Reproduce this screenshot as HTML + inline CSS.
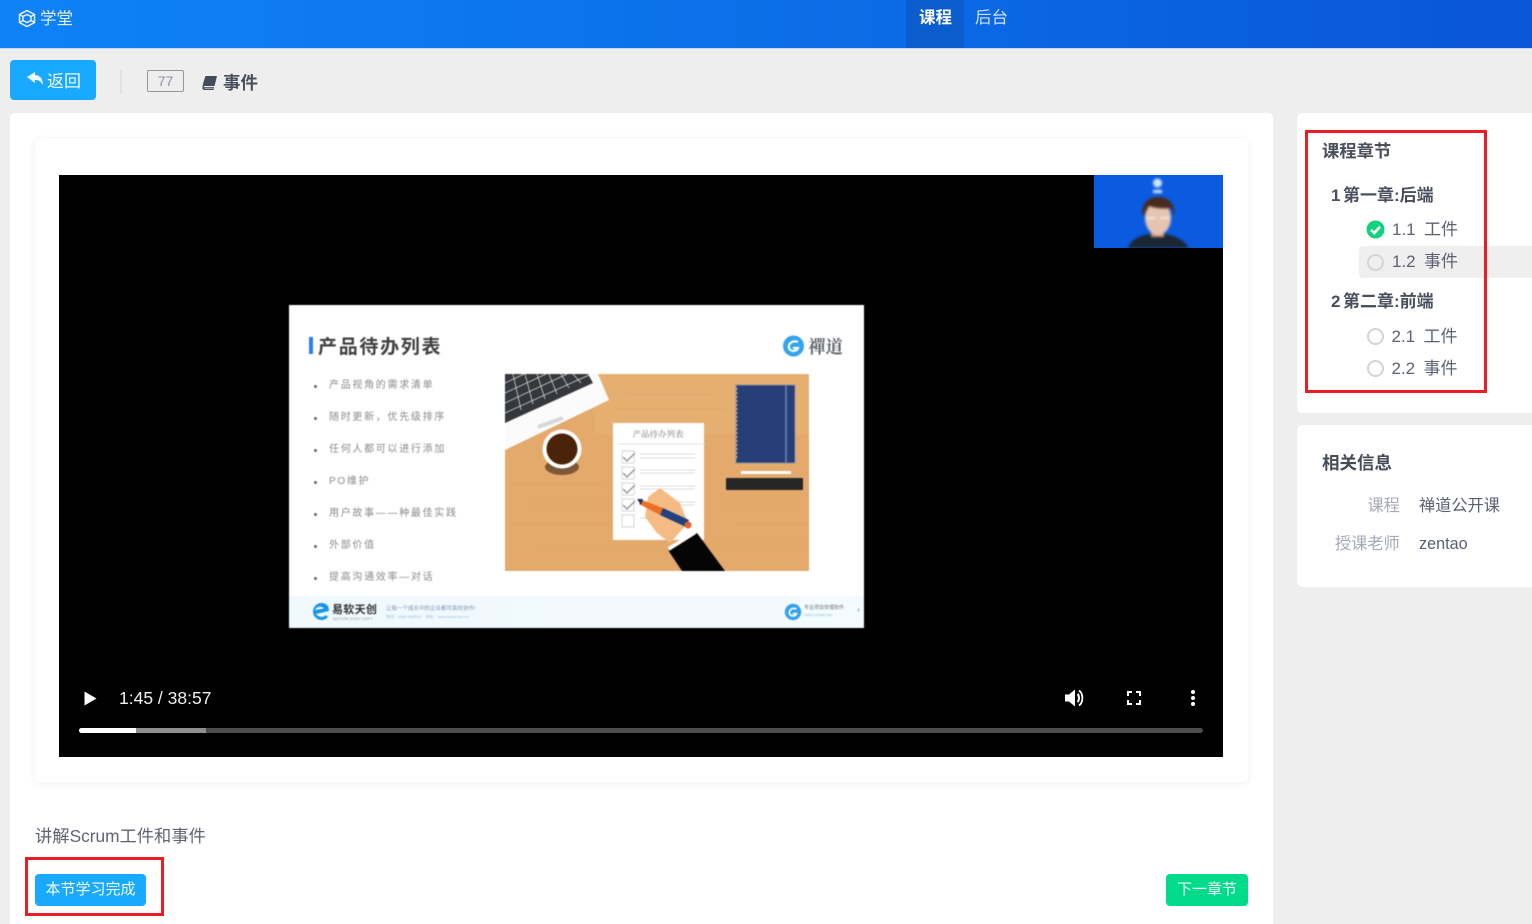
<!DOCTYPE html>
<html lang="zh"><head><meta charset="utf-8"><title>学堂</title>
<style>
*{box-sizing:border-box}
html,body{margin:0;padding:0;width:1532px;height:924px;overflow:hidden}
body{background:#eeeeee;position:relative;font-family:"Liberation Sans","Noto Sans CJK SC",sans-serif;color:#4a5060}
.wrap{position:absolute;left:0;top:0;width:1532px;height:924px;overflow:hidden;filter:blur(.3px)}
.slide{position:absolute;left:0;top:0;width:1532px;height:924px;filter:blur(.4px)}
.a{position:absolute;white-space:nowrap}
.card{position:absolute;background:#fff;border-radius:5px}
.b{font-weight:700}
.sl{position:absolute;left:329px;font-size:10px;letter-spacing:1.7px;color:#8a8a8a;white-space:nowrap;line-height:14px}
.dot{position:absolute;left:314px;width:3px;height:3px;border-radius:50%;background:#666}
.ring{position:absolute;width:17px;height:17px;border-radius:50%;border:2px solid #d4d4d4}
.n{position:absolute;font-size:17px;line-height:24px;color:#5d6373;white-space:nowrap}
.n span{margin-left:8.4px}
.ch{font-size:17px;line-height:23px;color:#4a4f5d;font-weight:700}
.ch span{margin-left:2.5px}
</style></head><body>
<div class="wrap">

<div class="a" style="left:0;top:0;width:1532px;height:49px;background:linear-gradient(90deg,#0f82f8 0%,#0b6fe8 50%,#0a55d8 100%);border-bottom:1px solid #c6d8f4"></div>
<svg class="a" style="left:18px;top:9px" width="18" height="19" viewBox="0 0 18 19" fill="none" stroke="#e6f0ff" stroke-width="1.500"><path d="M9 1.500 16.500 5.500v8L9 17.500 1.500 13.500v-8z"/><path d="M5 7.500 9 5.500l4 2v4l-4 2-4-2z"/><path d="M1.500 5.500 5 7.500M16.500 5.500 13 7.500M1.500 13.500 5 11.500M16.500 13.500 13 11.500"/></svg>
<div class="a" style="left:40px;top:8px;font-size:16.500px;line-height:22px;color:#e3eeff">学堂</div>
<div class="a" style="left:906px;top:0;width:58px;height:48px;background:#0b5ccd"></div>
<div class="a b" style="left:919px;top:7px;font-size:16.500px;line-height:22px;color:#fff">课程</div>
<div class="a" style="left:975px;top:7px;font-size:16.500px;line-height:22px;color:#cfe1fb">后台</div>

<div class="a" style="left:10px;top:60px;width:86px;height:40px;background:#19aaff;border-radius:4px"></div>
<svg class="a" style="left:26px;top:71px" width="18" height="16" viewBox="0 0 18 16"><path d="M1 6 9 1V4C14 4 17 8 17 14 15 10.500 13 9 9 9V12z" fill="#eef8ff"/></svg>
<div class="a" style="left:47px;top:70px;font-size:17px;line-height:23px;color:#f2faff">返回</div>
<div class="a" style="left:120px;top:70px;width:2px;height:24px;background:#e2e2e2"></div>
<div class="a" style="left:147px;top:70px;width:37px;height:22px;border:1px solid #9398a3;border-radius:2px;font-size:14px;line-height:20px;text-align:center;color:#8e93a0">77</div>
<svg class="a" style="left:201px;top:75px" width="17" height="16" viewBox="0 0 17 16"><path d="M4.500 1H16L13.500 11H3L1.500 14.500C1 12 2 8 4.500 1z" fill="#454b59"/><path d="M3 12H13L12.500 15H3C1.500 15 1.500 12.500 3 12z" fill="#454b59"/><path d="M3.500 13.200H12.300" stroke="#ddd" stroke-width=".8"/></svg>
<div class="a b" style="left:223px;top:71px;font-size:17.500px;line-height:24px;color:#4a4f5c">事件</div>

<div class="card" style="left:10px;top:113px;width:1263px;height:811px;border-radius:5px 5px 0 0"></div>
<div class="card" style="left:35px;top:139px;width:1213px;height:643px;box-shadow:0 1px 8px rgba(0,0,0,.07)"></div>

<div class="a" style="left:59px;top:175px;width:1164px;height:582px;background:#000"></div>
<div class="a" style="left:1094px;top:175px;width:129px;height:73px;background:#0a5be0;overflow:hidden">
 <svg width="129" height="73" viewBox="0 0 129 73" style="filter:blur(1.200px)">
  <circle cx="63.500" cy="8" r="4.500" fill="#cfe6fa"/><rect x="59" y="15" width="9" height="3" fill="#dfeafa"/>
  <path d="M34 73c3-9 12-12 20-14h18c9 2 17 5 23 14z" fill="#1c2735"/>
  <rect x="57" y="50" width="13" height="12" fill="#c99a80"/>
  <ellipse cx="64" cy="43" rx="13" ry="17" fill="#e5c4b0"/>
  <path d="M49 42c-3-14 6-20 15-20s18 5 16 19l-3-8c-7 1-17 0-22-2z" fill="#4a2a1e"/>
  <path d="M52 43h10M66 43h10" stroke="#f1e8e0" stroke-width="2"/>
 </svg>
</div>

<div class="slide">
<div class="a" style="left:289px;top:305px;width:575px;height:323px;background:#fff"></div>
<div class="a" style="left:309px;top:337px;width:4px;height:17px;background:#2b7fee"></div>
<div class="a b" style="left:318px;top:335px;font-size:19px;letter-spacing:1.700px;line-height:26px;color:#3f3f3f">产品待办列表</div>
<svg class="a" style="left:782px;top:335px" width="23" height="22" viewBox="0 0 23 22"><circle cx="11.500" cy="11" r="10.500" fill="#33a3ec"/><path d="M16 7c-5-2-10 1-9 6 1 4 8 4 9 0h-5" fill="none" stroke="#fff" stroke-width="2.200"/></svg>
<div class="a" style="left:808px;top:337px;font-size:17.500px;line-height:20px;color:#5d626a;font-family:'Noto Serif CJK SC',serif;font-weight:700">禪道</div>

<div class="dot" style="top:385px"></div><div class="sl" style="top:379px">产品视角的需求清单</div>
<div class="dot" style="top:417px"></div><div class="sl" style="top:411px">随时更新，优先级排序</div>
<div class="dot" style="top:449px"></div><div class="sl" style="top:443px">任何人都可以进行添加</div>
<div class="dot" style="top:481px"></div><div class="sl" style="top:475px">PO维护</div>
<div class="dot" style="top:513px"></div><div class="sl" style="top:507px">用户故事——种最佳实践</div>
<div class="dot" style="top:545px"></div><div class="sl" style="top:539px">外部价值</div>
<div class="dot" style="top:577px"></div><div class="sl" style="top:571px">提高沟通效率—对话</div>

<svg class="a" style="left:505px;top:374px" width="304" height="197" viewBox="0 0 304 197">
 <rect width="304" height="197" fill="#e3aa6c"/>
 <path d="M90 0h214v60H90z" fill="#e8b377" opacity=".6"/>
 <g stroke="#d99f60" stroke-width=".7" opacity=".6"><path d="M0 110h100M20 130h90M0 150h110M30 175h140M215 130h85M230 150h74M200 170h104M120 20h90M110 35h110"/></g>
 <path d="M0 76 104 26 93 0H0z" fill="#fbfbfb"/>
 <path d="M0 0H83L88 9 0 49z" fill="#34373b"/>
 <g stroke="#e8e8e8" stroke-width=".7"><path d="M0 9 19 0M0 19 41 0M0 29 62 0M0 39 84 1"/><path d="M8 0l8 36M20 0l8 30M32 0l8 25M44 0l8 20M56 0l8 14M68 0l8 9"/></g>
 <path d="M33 53 58 44" stroke="#d8d8d8" stroke-width="4"/>
 <ellipse cx="57" cy="93" rx="17" ry="8" fill="#6c4a2d" opacity=".85"/>
 <circle cx="57" cy="75" r="19.500" fill="#fff"/><circle cx="57" cy="75" r="15.500" fill="#4a2308"/>
 <rect x="108" y="49" width="91" height="117" fill="#fff"/>
 <text x="153" y="63" font-size="8.500" fill="#777" text-anchor="middle" font-family="'Noto Serif CJK SC',serif">产品待办列表</text>
 <path d="M112 70h88" stroke="#e2e2e2"/>
 <g fill="none" stroke="#d5d5d5"><rect x="117" y="77" width="12" height="12"/><rect x="117" y="93" width="12" height="12"/><rect x="117" y="109" width="12" height="12"/><rect x="117" y="125" width="12" height="12"/><rect x="117" y="141" width="12" height="12"/></g>
 <g fill="none" stroke="#777" stroke-width="1"><path d="M118 83l4 4 8-8M118 99l4 4 8-8M118 115l4 4 8-8M118 131l4 4 8-8"/></g>
 <g stroke="#dcdcdc"><path d="M135 80h55M135 84h55M135 96h55M135 99h55M135 112h55M135 115h55M150 128h40M150 131h40M135 144h20"/></g>
 <path d="M143 123 155 114 175 129 183 149 165 169 152 159 140 143z" fill="#f5bb84"/>
 <path d="M137 126 158 134 155 141 134 130z" fill="#ed6f26"/><path d="M132 125 138 125 136 131z" fill="#1d2f5a"/>
 <path d="M158 134 184 146 181 153 155 141z" fill="#23407f"/><circle cx="183" cy="151" r="3.500" fill="#e4622a"/>
 <path d="M163 176 192 159 220 197H177z" fill="#050505"/><path d="M163 173 187 159 191 160 164 177z" fill="#fff"/>
 <rect x="231" y="11" width="59" height="78" fill="#263f78" stroke="#8a8f9c"/>
 <path d="M281 11v78" stroke="#5d77a8" stroke-width="2"/>
 <path d="M231 14v72" stroke="#c9a16f" stroke-width="3" stroke-dasharray="2 2"/>
 <rect x="236" y="97" width="50" height="3" fill="#fff"/>
 <rect x="221" y="104" width="77" height="12" rx="1" fill="#262626"/>
</svg>

<div class="a" style="left:289px;top:596px;width:575px;height:32px;background:linear-gradient(90deg,#f0f9fe,#f4fbfe)"></div>
<svg class="a" style="left:310px;top:602px" width="20" height="19" viewBox="0 0 20 19"><path d="M18 4A8.500 8.500 0 1 0 18 15l-2-2c-3 3-8 2-10-1l13-3c0-2-.5-3.500-1-5zM5 8c2-4 7-4 9-1.500z" fill="#1596e8"/></svg>
<div class="a b" style="left:332px;top:604px;font-size:11px;line-height:13px;letter-spacing:.3px;color:#333">易软天创</div>
<div class="a" style="left:333px;top:616px;font-size:4px;line-height:5px;color:#999">NATURE EASY SOFT</div>
<div class="a" style="left:386px;top:606px;font-size:5.500px;line-height:7px;color:#7d94b5">让每一个成长中的企业都可高效协作!</div>
<div class="a" style="left:386px;top:614px;font-size:4px;line-height:6px;color:#9cc0e0">电话：4006-889923　网址：www.easycorp.cn</div>
<svg class="a" style="left:784px;top:603px" width="18" height="18" viewBox="0 0 23 22"><circle cx="11.500" cy="11" r="10.500" fill="#33a3ec"/><path d="M16 7c-5-2-10 1-9 6 1 4 8 4 9 0h-5" fill="none" stroke="#fff" stroke-width="2.200"/></svg>
<div class="a" style="left:804px;top:605px;font-size:5px;line-height:7px;color:#777">专业项目管理软件</div>
<div class="a" style="left:804px;top:612px;font-size:4px;line-height:6px;color:#8fc0e8">www.zentao.net</div>
<div class="a" style="left:857px;top:608px;font-size:5px;line-height:7px;color:#8aa">4</div>
</div>

<svg class="a" style="left:84px;top:691px" width="13" height="15" viewBox="0 0 13 15"><path d="M0.500 .5 12.500 7.500 .5 14.500z" fill="#fff"/></svg>
<div class="a" style="left:119px;top:688px;font-size:17.500px;line-height:20px;color:#f1f1f1">1:45 / 38:57</div>
<svg class="a" style="left:1064px;top:688px" width="22" height="20" viewBox="0 0 22 20"><path d="M1 6.500h4L11 1.500v17L5 13.500H1z" fill="#fff"/><path d="M13.500 6c2 2 2 6 0 8" stroke="#fff" stroke-width="2" fill="none"/><path d="M15 2.500c4.500 3 4.500 12 0 15" stroke="#fff" stroke-width="1.800" fill="none"/></svg>
<svg class="a" style="left:1127px;top:691px" width="14" height="14" viewBox="0 0 14 14" fill="none" stroke="#fff" stroke-width="2"><path d="M1 5V1h4M9 1h4v4M13 9v4H9M5 13H1V9"/></svg>
<svg class="a" style="left:1190px;top:689px" width="6" height="18" viewBox="0 0 6 18" fill="#fff"><circle cx="3" cy="3" r="2"/><circle cx="3" cy="9" r="2"/><circle cx="3" cy="15" r="2"/></svg>
<div class="a" style="left:79px;top:728px;width:1124px;height:5px;border-radius:3px;background:#4d4d4d"></div>
<div class="a" style="left:79px;top:728px;width:127px;height:5px;border-radius:3px 0 0 3px;background:#8f8f8f"></div>
<div class="a" style="left:79px;top:728px;width:57px;height:5px;border-radius:3px 0 0 3px;background:#fff"></div>

<div class="a" style="left:35px;top:824px;font-size:17.300px;line-height:24px;color:#5f6470">讲解Scrum工件和事件</div>
<div class="a" style="left:25px;top:857px;width:139px;height:59px;border:3px solid #ec1c24"></div>
<div class="a" style="left:35px;top:874px;width:111px;height:32px;background:#19aaff;border-radius:4px;font-size:15px;line-height:31px;text-align:center;color:#f3fbff">本节学习完成</div>
<div class="a" style="left:1166px;top:874px;width:82px;height:32px;background:#00db8b;border-radius:4px;font-size:15px;line-height:31px;text-align:center;color:#eefff8">下一章节</div>

<div class="card" style="left:1297px;top:113px;width:260px;height:300px"></div>
<div class="a" style="left:1359px;top:246px;width:173px;height:32px;background:#efefef;border-radius:4px 0 0 4px"></div>
<div class="a" style="left:1305px;top:130px;width:182px;height:263px;border:3px solid #ec1c24"></div>
<div class="a b" style="left:1322px;top:139px;font-size:17.300px;line-height:24px;color:#4a4f5d">课程章节</div>
<div class="a ch" style="left:1331px;top:184px">1<span>第一章:后端</span></div>
<svg class="a" style="left:1366px;top:220px" width="19" height="19" viewBox="0 0 19 19"><circle cx="9.500" cy="9.500" r="9" fill="#10d27f"/><path d="M5 9.800l3.200 3.200L14 6.800" stroke="#fff" stroke-width="2.600" fill="none"/></svg>
<div class="n" style="left:1392px;top:218px">1.1<span>工件</span></div>
<div class="ring" style="left:1367px;top:254px"></div>
<div class="n" style="left:1392px;top:250px">1.2<span>事件</span></div>
<div class="a ch" style="left:1331px;top:290px">2<span>第二章:前端</span></div>
<div class="ring" style="left:1367px;top:328px"></div>
<div class="n" style="left:1391.500px;top:325px">2.1<span>工件</span></div>
<div class="ring" style="left:1367px;top:360px"></div>
<div class="n" style="left:1391.500px;top:357px">2.2<span>事件</span></div>

<div class="card" style="left:1297px;top:425px;width:260px;height:162px"></div>
<div class="a b" style="left:1322px;top:451px;font-size:17.500px;line-height:24px;color:#474c59">相关信息</div>
<div class="a" style="left:1367.500px;top:495px;font-size:16.200px;line-height:23px;color:#a4a9b6">课程</div>
<div class="a" style="left:1419px;top:495px;font-size:16.200px;line-height:23px;color:#5b6070">禅道公开课</div>
<div class="a" style="left:1335px;top:533px;font-size:16.200px;line-height:23px;color:#a4a9b6">授课老师</div>
<div class="a" style="left:1419px;top:533px;font-size:16.200px;line-height:23px;color:#5b6070">zentao</div>
</div>
</body></html>
